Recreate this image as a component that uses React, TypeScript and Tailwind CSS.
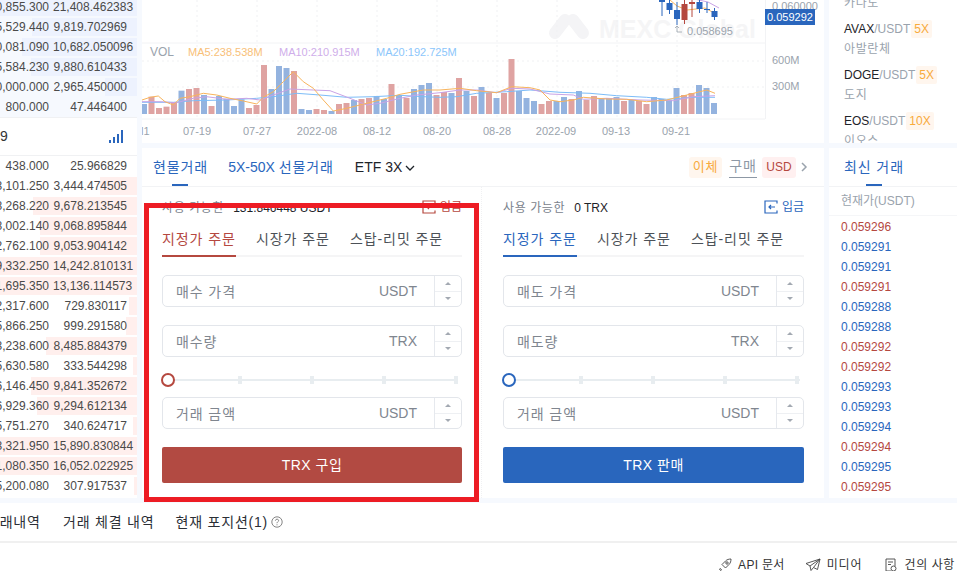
import React from 'react';

const asks = [
    ['0,855.300', '21,408.462383', 0],
    ['5,529.440', '9,819.702969', 32],
    ['0,081.090', '10,682.050096', 22],
    ['5,584.230', '9,880.610433', 31],
    ['0,000.000', '2,965.450000', 105],
    ['800.000', '47.446400', 137],
] as const;

const bids = [
    ['438.000', '25.966829', 137],
    ['3,101.250', '3,444.474505', 100],
    ['8,268.220', '9,678.213545', 33],
    ['8,002.140', '9,068.895844', 40],
    ['2,762.100', '9,053.904142', 40],
    ['9,332.250', '14,242.810131', 0],
    ['1,695.350', '13,136.114573', 0],
    ['2,317.600', '729.830117', 129],
    ['5,866.250', '999.291580', 126],
    ['3,238.600', '8,485.884379', 46],
    ['5,630.580', '333.544298', 133],
    ['6,146.450', '9,841.352672', 31],
    ['6,929.360', '9,294.612134', 37],
    ['5,751.270', '340.624717', 133],
    ['3,321.950', '15,890.830844', 0],
    ['1,080.350', '16,052.022925', 0],
    ['5,200.080', '307.917537', 134],
] as const;

const trades: [string, 'r' | 'b'][] = [
    ['0.059296', 'r'], ['0.059291', 'b'], ['0.059291', 'b'], ['0.059291', 'r'], ['0.059288', 'b'], ['0.059288', 'b'],
    ['0.059292', 'r'], ['0.059292', 'r'], ['0.059293', 'b'], ['0.059293', 'b'], ['0.059294', 'b'], ['0.059294', 'r'],
    ['0.059295', 'b'], ['0.059295', 'r'],
];

// bar tops, read in 3x pixels with 342 as the baseline
const bars: [number, 'r' | 'b'][] = [
    [312, 'b'], [290, 'r'], [324, 'r'], [320, 'r'], [306, 'r'], [272, 'b'], [267, 'r'], [264, 'r'], [285, 'b'], [318, 'r'],
    [288, 'b'], [296, 'b'], [318, 'b'], [298, 'b'], [324, 'r'], [315, 'r'], [195, 'r'], [267, 'b'], [198, 'b'], [204, 'b'],
    [213, 'r'], [327, 'b'], [330, 'b'], [327, 'r'], [330, 'r'], [333, 'b'], [312, 'r'], [309, 'r'], [300, 'b'], [297, 'r'],
    [294, 'r'], [288, 'b'], [297, 'b'], [252, 'r'], [285, 'b'], [294, 'r'], [267, 'b'], [255, 'b'], [249, 'b'], [285, 'r'],
    [276, 'r'], [279, 'b'], [234, 'r'], [273, 'b'], [288, 'r'], [261, 'b'], [279, 'r'], [294, 'b'], [279, 'r'], [177, 'r'],
    [273, 'b'], [294, 'b'], [303, 'b'], [312, 'r'], [303, 'r'], [303, 'b'], [291, 'b'], [297, 'r'], [273, 'b'], [300, 'r'],
    [288, 'r'], [297, 'b'], [294, 'b'], [291, 'b'], [303, 'r'], [300, 'b'], [303, 'r'], [312, 'r'], [291, 'b'], [297, 'b'],
    [300, 'b'], [264, 'b'], [285, 'r'], [279, 'r'], [255, 'b'], [264, 'b'], [309, 'b'],
];

// line points in chart pixels: [x, y]
const toLine = (a: number[][], b: number[][]) =>
    [...a.map(([x, y]) => [x / 3 - 2, 40 + y / 3]), ...b.map(([x, y]) => [298 + x / 3, 40 + y / 3])]
        .map(p => p.map(n => n.toFixed(1)).join(','))
        .join(' ');

const ma5 = toLine(
    [[6, 180], [30, 172], [55, 168], [75, 185], [100, 195], [120, 175], [150, 170], [190, 160], [230, 165], [270, 175], [310, 183], [350, 192], [370, 172], [400, 155], [430, 125], [460, 95], [490, 125], [520, 145], [550, 180], [580, 213], [620, 205], [680, 190], [740, 175], [780, 163], [850, 150]],
    [[0, 150], [60, 145], [110, 152], [170, 158], [215, 140], [270, 143], [300, 150], [330, 180], [360, 185], [400, 180], [430, 172], [500, 177], [560, 178], [620, 185], [680, 180], [740, 165], [800, 150], [825, 160]],
);
const ma10 = toLine(
    [[6, 185], [60, 185], [110, 188], [160, 175], [200, 170], [260, 178], [320, 175], [360, 180], [400, 165], [450, 147], [520, 150], [570, 152], [630, 175], [680, 195], [720, 190], [780, 175], [830, 165]],
    [[0, 158], [60, 150], [110, 150], [170, 158], [215, 145], [270, 147], [330, 162], [400, 165], [430, 178], [500, 175], [600, 180], [700, 182], [760, 170], [825, 167]],
);
const ma20 = toLine(
    [[6, 187], [100, 187], [160, 182], [260, 180], [350, 175], [400, 170], [470, 160], [540, 165], [620, 172], [700, 170], [780, 166], [850, 170]],
    [[0, 172], [50, 170], [110, 160], [200, 155], [270, 150], [360, 157], [450, 160], [530, 167], [620, 172], [680, 178], [760, 172], [825, 172]],
);

const gridX = [55, 115, 175, 235, 295, 355, 415, 475, 535];
const dateLabels: [number, string][] = [
    [55, '07-19'], [115, '07-27'], [175, '2022-08'], [235, '08-12'], [295, '08-20'], [355, '08-28'], [414, '2022-09'], [474, '09-13'], [534, '09-21'],
];

// [x, bodyTop, bodyBottom, wickTop, wickBottom, colour]
const candles: [number, number, number, number, number, string][] = [
    [520, 0, 2, 0, 16, '#2a66bd'],
    [527.5, 3, 10, 0, 14, '#2a66bd'],
    [535, 10, 19, 2, 25, '#2a66bd'],
    [542.5, 4, 20, 0, 24, '#b5483f'],
    [550, 2, 4, 0, 17, '#b5483f'],
    [557.5, 2, 9, 0, 13, '#2a66bd'],
    [565, 9, 10, 2, 13, '#2a66bd'],
    [572.5, 11, 17, 8, 20, '#2a66bd'],
];

const BookRow: React.FC<{ price: string; amount: string; left: number; side: 'ask' | 'bid' }> = ({ price, amount, left, side }) => (
    <div className="relative h-[20px] flex items-center text-[12px] text-[#4a4a4a] whitespace-nowrap">
        {left < 137 && (
            <div
                className={`absolute top-px bottom-px right-0 ${side === 'ask' ? 'bg-[#edf2fe]' : 'bg-[#ffefed]'}`}
                style={{ left }}
            />
        )}
        <div className="relative w-[49px] overflow-hidden flex justify-end shrink-0">{price}</div>
        <div className="relative w-[74px] ml-[4px] text-right">{amount}</div>
    </div>
);

const Stepper: React.FC = () => (
    <div className="w-[27px] h-full border-l border-[#e6e9ee] flex flex-col">
        <div className="flex-1 flex items-center justify-center border-b border-[#eef0f3]">
            <div className="w-0 h-0 border-x-[3px] border-x-transparent border-b-[3px] border-b-[#a3a9b2]" />
        </div>
        <div className="flex-1 flex items-center justify-center">
            <div className="w-0 h-0 border-x-[3px] border-x-transparent border-t-[3px] border-t-[#a3a9b2]" />
        </div>
    </div>
);

const Field: React.FC<{ label: string; unit: string }> = ({ label, unit }) => (
    <div className="h-[32px] flex items-center border-[1.5px] border-[#e3e6eb] rounded-[5px] pl-[13px] text-[14px] text-[#80868f]">
        <span className="flex-1 pt-[2px] tracking-[0.9px]">{label}</span>
        <span className="mr-[17px] pt-[1px]">{unit}</span>
        <Stepper />
    </div>
);

const Slider: React.FC<{ ring: string }> = ({ ring }) => (
    <div className="relative h-[16px] flex items-center">
        <div className="absolute left-0 right-[4px] h-[2px] bg-[#e8edf0]" />
        <div className={`relative -ml-[1px] w-[14px] h-[14px] rounded-full bg-white border-2 ${ring}`} />
        <div className="relative ml-[63px] flex gap-[68px]">
            {[0, 1, 2, 3].map(i => (
                <div key={i} className="w-[4px] h-[8px] bg-[#e8edf0]" />
            ))}
        </div>
    </div>
);

const DepositIcon: React.FC<{ color: string }> = ({ color }) => (
    <svg width="14" height="14" viewBox="0 0 14 14" fill="none" stroke={color} strokeWidth="1.2">
        <path d="M13 3.5V1H1v12h12v-2.5" />
        <path d="M11 7H5M7 5L5 7l2 2" />
    </svg>
);

const OrderForm: React.FC<{
    available: React.ReactNode;
    tabColor: string;
    tabBorder: string;
    ring: string;
    button: string;
    buttonText: string;
    priceLabel: string;
    amountLabel: string;
    iconColor: string;
    depositText: string;
    width: string;
}> = ({ available, tabColor, tabBorder, ring, button, buttonText, priceLabel, amountLabel, iconColor, depositText, width }) => (
    <div className={`${width} flex flex-col`}>
        <div className="h-[41px] pb-[1px] flex items-center justify-between text-[12px]">
            <div className="flex items-center pt-[1px]">{available}</div>
            <div className={`flex items-center gap-[4px] ${depositText}`}>
                <DepositIcon color={iconColor} />
                <span>입금</span>
            </div>
        </div>
        <div className="h-[29px] flex items-start gap-[20px] border-b-2 border-[#f5f5f6] text-[14px] text-[#4c5157] tracking-[0.9px]">
            <div className={`h-[29px] w-[74px] whitespace-nowrap pt-[1px] border-b-2 ${tabColor} ${tabBorder}`}>지정가 주문</div>
            <div className="w-[74px] whitespace-nowrap pt-[1px]">시장가 주문</div>
            <div className="whitespace-nowrap pt-[1px]">스탑-리밋 주문</div>
        </div>
        <div className="mt-[18px]">
            <Field label={priceLabel} unit="USDT" />
        </div>
        <div className="mt-[18px]">
            <Field label={amountLabel} unit="TRX" />
        </div>
        <div className="mt-[15px]">
            <Slider ring={ring} />
        </div>
        <div className="mt-[9px]">
            <Field label="거래 금액" unit="USDT" />
        </div>
        <div className={`mt-[18px] h-[36px] rounded-[2px] flex items-center justify-center text-white text-[14px] tracking-[0.5px] ${button}`}>
            {buttonText}
        </div>
    </div>
);

const Badge: React.FC<{ children: string }> = ({ children }) => (
    <span className="ml-[1px] px-[3px] h-[18px] flex items-center rounded-[2px] bg-[#fff6ee] text-[#f8aa3c]">{children}</span>
);

const App: React.FC = () => {
    return (
        <div className='relative w-[957px] h-[571px] overflow-hidden bg-white flex flex-col font-["Liberation_Sans","Noto_Sans_CJK_KR",sans-serif]'>
            <div className="h-[503px] shrink-0 flex bg-[#f6f9fe]">
                {/* order book */}
                <div className="w-[137px] shrink-0 h-[498px] overflow-hidden bg-white">
                    <div className="-mt-[3px] bg-[#f6f9fe]">
                        {asks.map(r => (
                            <BookRow key={r[1]} price={r[0]} amount={r[1]} left={r[2]} side="ask" />
                        ))}
                    </div>
                    <div className="h-[39px] border-y border-[#f0f1f3] flex items-center justify-between pr-[14px] bg-white">
                        <span className="text-[14px] text-[#333]">9</span>
                        <svg width="14" height="13" viewBox="0 0 14 13" fill="#2a66bd">
                            <rect x="0" y="10" width="2" height="3" />
                            <rect x="4" y="7" width="2" height="6" />
                            <rect x="8" y="4" width="2" height="9" />
                            <rect x="12" y="0" width="2" height="13" />
                        </svg>
                    </div>
                    {bids.map(r => (
                        <BookRow key={r[1]} price={r[0]} amount={r[1]} left={r[2]} side="bid" />
                    ))}
                </div>

                {/* chart and order forms */}
                <div className="ml-[5px] w-[682px] shrink-0 flex flex-col">
                    <svg width="682" height="143" className="shrink-0 bg-white" fontFamily="Liberation Sans, sans-serif" fontSize="11">
                        <g fill="#f5f5f6">
                            <g stroke="#f4f4f6" strokeWidth="12" strokeLinecap="round">
                                <line x1="413" y1="33" x2="423" y2="20" />
                                <line x1="431" y1="20" x2="441" y2="33" />
                            </g>
                            <text x="457" y="38" fontSize="25" fontWeight="700">MEXC Global</text>
                        </g>
                        <line x1="0" y1="43" x2="623" y2="43" stroke="#f2f3f5" />
                        <line x1="0" y1="119" x2="623" y2="119" stroke="#f2f3f5" />
                        <line x1="623.5" y1="0" x2="623.5" y2="119" stroke="#f2f3f5" />
                        <line x1="0" y1="61" x2="623" y2="61" stroke="#f0f1f3" strokeDasharray="2 3" />
                        <line x1="0" y1="87" x2="623" y2="87" stroke="#f0f1f3" strokeDasharray="2 3" />
                        {gridX.map(x => (
                            <line key={x} x1={x} y1="0" x2={x} y2="119" stroke="#f0f1f3" strokeDasharray="2 3" />
                        ))}
                        {bars.map(([top, c], i) => (
                            <rect
                                key={i}
                                x={i * 7.5 - 1}
                                y={114 - (342 - top) / 3}
                                width="6"
                                height={(342 - top) / 3}
                                fill={c === 'r' ? '#dfa3a2' : '#94b3df'}
                            />
                        ))}
                        <polyline points={ma20} fill="none" stroke="#7cbcf8" />
                        <polyline points={ma10} fill="none" stroke="#c9a3e6" />
                        <polyline points={ma5} fill="none" stroke="#f8b45c" />
                        <path d="M528 0l7 6 10 4 18 -2 11 6" fill="none" stroke="#f8b45c" />
                        <path d="M552 -1l14 3 11 6" fill="none" stroke="#c9a3e6" />
                        {candles.map(([x, a, b, w1, w2, c]) => (
                            <g key={x}>
                                <line x1={x} y1={w1} x2={x} y2={w2} stroke={c} />
                                <rect x={x - 3} y={a} width="6" height={b - a} fill={c} />
                            </g>
                        ))}
                        <text x="8" y="56" fontSize="12" fill="#9aa3ad">VOL</text>
                        <text x="46" y="56" fill="#f8c078">MA5:238.538M</text>
                        <text x="137" y="56" fill="#cfaeea">MA10:210.915M</text>
                        <text x="234" y="56" fill="#8cc6fb">MA20:192.725M</text>
                        {dateLabels.map(([x, t]) => (
                            <text key={t} x={x} y="135" fill="#9aa3ad" textAnchor="middle">{t}</text>
                        ))}
                        <text x="-1" y="135" fill="#9aa3ad">l1</text>
                        <text x="630" y="10" fill="#9aa3ad">0.060000</text>
                        <text x="630" y="64" fill="#9aa3ad">600M</text>
                        <text x="630" y="90" fill="#9aa3ad">300M</text>
                        <path d="M535 26v6h5M533 28l2-2 2 2" fill="none" stroke="#9aa3ad" strokeWidth="0.8" />
                        <text x="545" y="35" fill="#9aa3ad">0.058695</text>
                        <rect x="623" y="9" width="50" height="16" fill="#2a66bd" />
                        <text x="625" y="21" fill="#fff">0.059292</text>
                    </svg>

                    <div className="mt-[5px] h-[350px] bg-white flex flex-col">
                        <div className="h-[39px] shrink-0 border-b border-[#f2f3f5] flex items-center pl-[11px] pr-[16px]">
                            <div className="relative h-full pt-[1px] flex items-center text-[14px] text-[#2a66bd] tracking-[0.9px] whitespace-nowrap">
                                현물거래
                                <div className="absolute bottom-0 left-[19px] w-[16px] h-[2px] bg-[#2a66bd]" />
                            </div>
                            <div className="ml-[20px] pt-[1px] text-[14px] text-[#2a66bd] whitespace-nowrap">
                                5X-50X <span className="tracking-[0.9px]">선물거래</span>
                            </div>
                            <div className="ml-[21px] pt-[1px] text-[14px] text-[#1e2329] flex items-center gap-[3px] whitespace-nowrap">
                                ETF 3X
                                <svg width="10" height="6" viewBox="0 0 10 6" fill="none" stroke="#1e2329" strokeWidth="1.3">
                                    <path d="M1 1l4 4 4-4" />
                                </svg>
                            </div>
                            <div className="flex-1" />
                            <div className="h-[21px] w-[33px] rounded-[3px] bg-[#fff6ee] text-[#f8aa3c] text-[13px] flex items-center justify-center tracking-[0.9px]">이체</div>
                            <div className="ml-[7px] h-[21px] w-[28px] border-b border-[#8d98a5] text-[14px] text-[#8d98a5] flex items-center justify-center whitespace-nowrap tracking-[0.9px]">구매</div>
                            <div className="ml-[5px] h-[21px] w-[34px] rounded-[3px] bg-[#fff0f0] text-[#b5483f] text-[12px] flex items-center justify-center">USD</div>
                            <svg className="ml-[5px]" width="7" height="10" viewBox="0 0 7 10" fill="none" stroke="#9aa3ad" strokeWidth="1.5">
                                <path d="M1 1l4 4-4 4" />
                            </svg>
                        </div>
                        <div className="flex-1 flex">
                            <div className="w-[340px] pl-[20px] pr-[20px] border-r border-dotted border-[#f0f1f3]">
                                <OrderForm
                                    width="w-[300px]"
                                    available={
                                        <>
                                            <span className="text-[#7a828c] tracking-[0.6px]">사용 가능한</span>
                                            <span className="ml-[9px] text-[#1e2329]">131.846448 USDT</span>
                                        </>
                                    }
                                    tabColor="text-[#b5483f]"
                                    tabBorder="border-[#b5483f]"
                                    ring="border-[#b5483f]"
                                    button="bg-[#b24a42]"
                                    buttonText="TRX 구입"
                                    priceLabel="매수 가격"
                                    amountLabel="매수량"
                                    iconColor="#b5483f"
                                    depositText="text-[#b5483f]"
                                />
                            </div>
                            <div className="pl-[21px]">
                                <OrderForm
                                    width="w-[301px]"
                                    available={
                                        <>
                                            <span className="text-[#7a828c] tracking-[0.6px]">사용 가능한</span>
                                            <span className="ml-[9px] text-[#1e2329]">0 TRX</span>
                                        </>
                                    }
                                    tabColor="text-[#2a66bd]"
                                    tabBorder="border-[#2a66bd]"
                                    ring="border-[#2a66bd]"
                                    button="bg-[#2966bd]"
                                    buttonText="TRX 판매"
                                    priceLabel="매도 가격"
                                    amountLabel="매도량"
                                    iconColor="#2a66bd"
                                    depositText="text-[#2a66bd]"
                                />
                            </div>
                        </div>
                    </div>
                </div>

                {/* market list and latest trades */}
                <div className="ml-[5px] flex-1 flex flex-col min-w-0">
                    <div className="h-[143px] shrink-0 overflow-hidden bg-white pl-[15px] text-[12px] text-[#9aa3ad]">
                        <div className="-mt-[7px] h-[20px] flex items-center tracking-[0.6px]">카나도</div>
                        <div className="mt-[6px] h-[20px] flex items-center whitespace-nowrap">
                            <span className="text-[#1e2329]">AVAX</span>/USDT
                            <Badge>5X</Badge>
                        </div>
                        <div className="h-[20px] flex items-center tracking-[0.6px]">아발란체</div>
                        <div className="mt-[6px] h-[20px] flex items-center whitespace-nowrap">
                            <span className="text-[#1e2329]">DOGE</span>/USDT
                            <Badge>5X</Badge>
                        </div>
                        <div className="h-[20px] flex items-center tracking-[0.6px]">도지</div>
                        <div className="mt-[6px] h-[20px] flex items-center whitespace-nowrap">
                            <span className="text-[#1e2329]">EOS</span>/USDT
                            <Badge>10X</Badge>
                        </div>
                        <div className="h-[20px] flex items-center tracking-[0.6px]">이오스</div>
                    </div>
                    <div className="mt-[5px] h-[350px] bg-white flex flex-col">
                        <div className="h-[39px] shrink-0 border-b border-[#f2f3f5] pl-[15px] flex">
                            <div className="relative h-full flex items-center text-[14px] text-[#2a66bd] tracking-[0.9px] whitespace-nowrap">
                                최신 거래
                                <div className="absolute bottom-0 left-[22px] w-[16px] h-[2px] bg-[#2a66bd]" />
                            </div>
                        </div>
                        <div className="h-[29px] shrink-0 border-b border-[#f5f6f8] pl-[12px] flex items-center text-[12px] text-[#9aa3ad] whitespace-nowrap">
                            현재가(USDT)
                        </div>
                        <div className="pl-[12px] pt-[1px] text-[12px]">
                            {trades.map(([p, c], i) => (
                                <div key={i} className={`h-[20px] flex items-center ${c === 'r' ? 'text-[#b5483f]' : 'text-[#2a66bd]'}`}>{p}</div>
                            ))}
                        </div>
                    </div>
                </div>
            </div>

            {/* history tabs */}
            <div className="h-[40px] shrink-0 border-b-2 border-[#f0f0f0] flex items-center text-[14px] text-[#2b2f36] whitespace-nowrap overflow-hidden">
                <div className="-ml-[14px] w-[56px] shrink-0 tracking-[0.8px]">거래내역</div>
                <div className="ml-[21px] tracking-[0.8px]">거래 체결 내역</div>
                <div className="ml-[21px] tracking-[0.8px]">현재 포지션(1)</div>
                <svg className="ml-[3px]" width="12" height="12" viewBox="0 0 12 12" fill="none" stroke="#666" strokeWidth="0.8">
                    <circle cx="6" cy="6" r="5.2" />
                    <path d="M4.4 4.7c0-2 3.2-2 3.2-.1 0 1.2-1.6 1.2-1.6 2.6M6 8.3v1" />
                </svg>
            </div>

            {/* footer links */}
            <div className="flex-1 flex items-end justify-end -mb-[1px] pr-[2px] text-[12px] text-[#333] whitespace-nowrap">
                <div className="h-[14px] flex items-center gap-[6px] tracking-[0.3px]">
                    <svg width="14" height="14" viewBox="0 0 14 14" fill="none" stroke="#444" strokeWidth="0.9">
                        <path d="M1 11.5l2-1M2.500 13l1-2M4 6.500l3.500-3.500c1.500-1.500 3.500-2 5.500-2 0 2-.5 4-2 5.500L7.500 10z" />
                        <circle cx="9" cy="5" r="1.200" />
                    </svg>
                    API 문서
                </div>
                <div className="ml-[20px] h-[14px] flex items-center gap-[6px] tracking-[0.9px]">
                    <svg width="16" height="14" viewBox="0 0 16 14" fill="none" stroke="#444" strokeWidth="0.9">
                        <path d="M15 1L1 5.500l4 2.500 1 4.500 2.500-3 4 2zM5 8l10-7-6.500 8.500" />
                    </svg>
                    미디어
                </div>
                <div className="ml-[22px] h-[14px] flex items-center gap-[8px] tracking-[0.6px]">
                    <svg width="12" height="14" viewBox="0 0 12 14" fill="none" stroke="#444" strokeWidth="0.9">
                        <path d="M6 13H1V1h9v7M3 4h5M3 6.500h3" />
                        <circle cx="8.500" cy="10.500" r="2.500" />
                    </svg>
                    건의 사항
                </div>
            </div>

            {/* red highlight drawn over the buy form */}
            <div className="absolute left-[144px] top-[203px] w-[335px] h-[299px] border-[5px] border-[#ed1c24] pointer-events-none" />
        </div>
    );
};

export default App;
